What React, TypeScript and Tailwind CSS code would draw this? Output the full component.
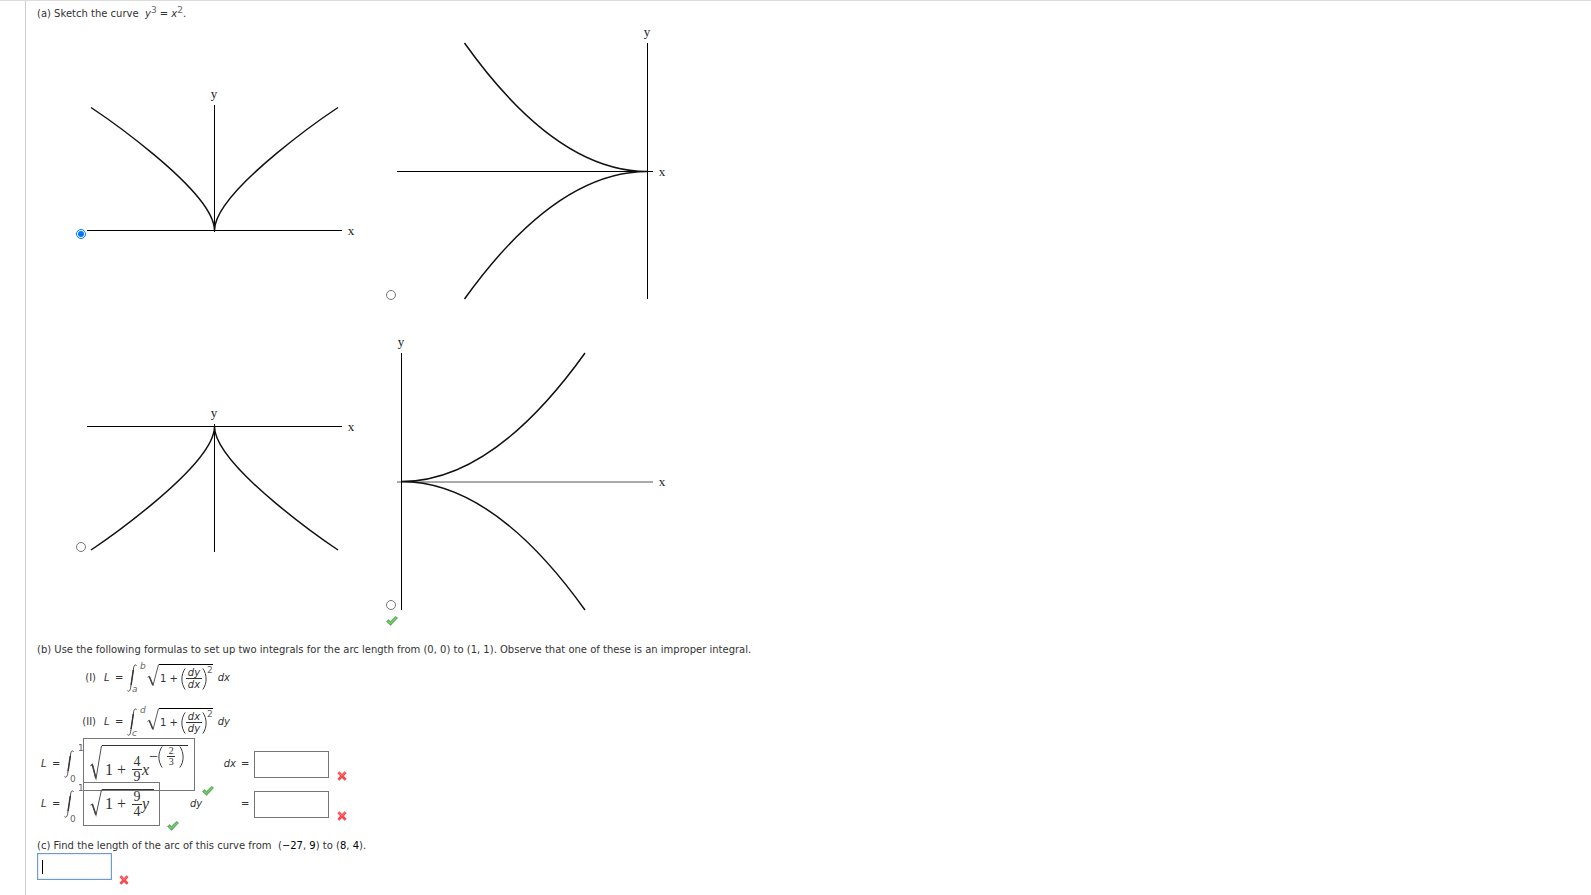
import React, { useState } from "react";

interface GraphProps {
  name: string;
  height: number;
  xAxis: string;
  yAxis: string;
  curve: string;
  xLabel: [number, number];
  yLabel: [number, number];
  lightAxis?: boolean;
}

const graphs: GraphProps[] = [
  {
    name: "Cusp at the origin opening upward",
    height: 156,
    xAxis: "M0 145.5H255",
    yAxis: "M127.5 20V147",
    curve: "M4 22.5C4 22.5 127.5 104.5 127.5 145.5C127.5 104.5 251 22.5 251 22.5",
    xLabel: [264, 150],
    yLabel: [127, 13],
  },
  {
    name: "Cusp at the origin opening to the left",
    height: 278,
    xAxis: "M0 147.5H256",
    yAxis: "M250.5 19V275",
    curve: "M67.5 19Q159 147.5 250.5 147.5Q159 147.5 67.5 275",
    xLabel: [265, 152],
    yLabel: [250, 12],
  },
  {
    name: "Cusp at the origin opening downward",
    height: 148,
    xAxis: "M0 20.5H255",
    yAxis: "M127.5 18V146",
    curve: "M4 144C4 144 127.5 61.5 127.5 20.5C127.5 61.5 251 144 251 144",
    xLabel: [264, 25],
    yLabel: [127, 11],
  },
  {
    name: "Cusp at the origin opening to the right",
    height: 278,
    xAxis: "M0 148H256",
    yAxis: "M4.5 19V276",
    curve: "M188 19Q96 147.5 4.5 147.5Q96 147.5 188 276",
    xLabel: [265, 152],
    yLabel: [4, 12],
    lightAxis: true,
  },
];

const Graph: React.FC<GraphProps> = ({ name, height, xAxis, yAxis, curve, xLabel, yLabel, lightAxis }) => (
  <svg
    role="img"
    aria-label={name}
    width={280}
    height={height}
    viewBox={`0 0 280 ${height}`}
    fill="none"
    className="shrink-0 overflow-visible font-['Liberation_Serif',serif] text-[13px]"
  >
    <path d={xAxis} stroke={lightAxis ? "#555" : "#000"} />
    <path d={yAxis} stroke="#000" />
    <path d={curve} stroke="#111" strokeWidth="1.5" />
    <text x={xLabel[0]} y={xLabel[1]} fill="#222" textAnchor="middle">x</text>
    <text x={yLabel[0]} y={yLabel[1]} fill="#222" textAnchor="middle">y</text>
  </svg>
);

const Check = () => (
  <svg role="img" aria-label="Correct" width="12" height="10" viewBox="0 0 12 10" className="shrink-0">
    <path d="M.5 5.5L2.6 3.6L4.4 5.4L9.5.5L11.6 1.8L4.6 9.4Z" fill="#5fb85a" stroke="#4a9c4a" strokeWidth=".6" />
    <path d="M1.8 5.4L4.4 7.4L10 1.8" fill="none" stroke="#8ed686" strokeWidth=".8" />
  </svg>
);

const Cross = () => (
  <svg role="img" aria-label="Incorrect" width="10" height="10" viewBox="0 0 10 10" className="shrink-0">
    <path d="M1.4 1.2L8.6 8.8M8.6 1.2L1.4 8.8" stroke="#f4494d" strokeWidth="2.7" />
    <path d="M1.3 1.1L5 4.8L8.5 1.2" fill="none" stroke="#ff8585" strokeWidth=".9" />
  </svg>
);

interface IntegralProps {
  lower: string;
  upper: string;
  numeric?: boolean;
}

const Integral: React.FC<IntegralProps> = ({ lower, upper, numeric }) => (
  <span className={`flex items-center text-[9px] leading-[9px] text-[#666] ${numeric ? "" : "italic"}`}>
    <svg width="10" height="28" viewBox="0 0 10 28" fill="none" stroke="#333" className="shrink-0">
      <path d="M9.7 1.8C8.5.2 7.2.8 6.7 3.5L3.7 23.5C3.2 27 1.8 28 .4 26.6" strokeWidth=".9" />
      <path d="M6.3 6L4.1 21" strokeWidth="1.4" />
    </svg>
    <span className={`flex w-2 flex-col justify-between ${numeric ? "h-10" : "h-8"}`}>
      <span className={numeric ? "pl-1" : "pl-[3px]"}>{upper}</span>
      <span className={numeric ? "-ml-1" : "-ml-[5px]"}>{lower}</span>
    </span>
  </span>
);

const Paren = ({ right, height }: { right?: boolean; height: number }) => (
  <svg width="5" height={height} viewBox="0 0 5 24" preserveAspectRatio="none" fill="none" stroke="#333" className="shrink-0">
    <path d={right ? "M.8.5C5.2 7 5.2 17 .8 23.5" : "M4.2.5C-.2 7-.2 17 4.2 23.5"} />
  </svg>
);

const Radical = ({ height }: { height: number }) => (
  <svg width="12" height={height} viewBox="0 0 12 24" preserveAspectRatio="none" fill="none" stroke="#444" className="shrink-0">
    <path d="M.5 14L2.3 12.8L6 22.5L11.5.5" strokeWidth=".9" />
    <path d="M2.3 13L5.8 22" strokeWidth="1.5" />
  </svg>
);

const Fraction = ({ top, bottom }: { top: string; bottom: string }) => (
  <span className="flex flex-col text-center">
    <span className="border-b border-[#333]">{top}</span>
    <span>{bottom}</span>
  </span>
);

interface FormulaProps {
  label: string;
  lower: string;
  upper: string;
  top: string;
  bottom: string;
}

const Formula: React.FC<FormulaProps> = ({ label, lower, upper, top, bottom }) => (
  <div className="flex h-11 items-center">
    <span className="w-[59px] text-right">{label}</span>
    <span className="ml-2 w-[11px] italic">L</span>
    <span className="w-[12px]">=</span>
    <Integral lower={lower} upper={upper} />
    <span className="ml-[2px] flex h-7 items-start">
      <Radical height={23} />
      <span className="flex h-7 items-center border-t border-black pl-px">
        <span className="w-[21px] whitespace-nowrap">1 +</span>
        <Paren height={22} />
        <span className="w-4 italic leading-[11px]">
          <Fraction top={top} bottom={bottom} />
        </span>
        <Paren right height={22} />
        <sup className="top-0 self-start pt-px text-[9px] leading-[9px] text-[#666]">2</sup>
      </span>
    </span>
    <span className="ml-[5px] italic">{bottom}</span>
  </div>
);

const AnswerInput = ({ label }: { label: string }) => (
  <input
    type="text"
    aria-label={label}
    className="h-[27px] w-[75px] shrink-0 border border-[#767676] bg-white px-1 outline-none"
  />
);

export default function App() {
  const [selected, setSelected] = useState(0);

  const option = (index: number) => (
    <label className="flex items-end gap-px">
      <input
        type="radio"
        name="sketch"
        checked={selected === index}
        onChange={() => setSelected(index)}
        className="mb-[2px] size-[10px] shrink-0"
      />
      <Graph {...graphs[index]} />
    </label>
  );

  return (
    <main className="border-t border-[#ddd] bg-white font-['DejaVu_Sans',Verdana,sans-serif] text-[10px] leading-5 text-[#333]">
      <div className="ml-[25px] min-h-screen border-l border-[#ccc] pl-[11px]">
        <p className="pt-[3px]">
          (a) Sketch the curve &nbsp;<i>y</i>
          <sup className="text-[9px] text-[#666]">3</sup> = <i>x</i>
          <sup className="text-[9px] text-[#666]">2</sup>.
        </p>

        <div className="flex w-fit flex-col gap-8 pl-[39px]">
          <div className="flex items-center gap-[19px]">
            {option(0)}
            {option(1)}
          </div>
          <div className="flex items-center gap-[19px]">
            {option(2)}
            <div>
              {option(3)}
              <div className="flex pt-1">
                <Check />
              </div>
            </div>
          </div>
        </div>

        <p className="pt-[18px] leading-3">
          (b) Use the following formulas to set up two integrals for the arc length from (0, 0) to (1, 1). Observe that
          one of these is an improper integral.
        </p>

        <Formula label="(I)" lower="a" upper="b" top="dy" bottom="dx" />
        <Formula label="(II)" lower="c" upper="d" top="dx" bottom="dy" />

        <div className="flex h-10 items-center pl-1">
          <div className="flex w-[213px] items-center">
            <span className="w-[11px] italic">L</span>
            <span className="w-[12px]">=</span>
            <Integral lower="0" upper="1" numeric />
            <span className="ml-px flex h-[53px] w-28 shrink-0 items-start border border-[#767676] pl-[6px] pt-[6px] font-['Liberation_Serif',serif] text-base leading-5">
              <Radical height={36} />
              <span className="flex w-[86px] items-start border-t border-[#333] pl-[3px]">
                <span className="w-[27px] whitespace-nowrap pt-[14px]">1 +</span>
                <span className="w-[10px] pt-[9px] text-sm leading-[14px]">
                  <Fraction top="4" bottom="9" />
                </span>
                <span className="pt-[14px] italic">x</span>
                <span className="flex items-center">
                  <span className="leading-[22px]">−</span>
                  <Paren height={22} />
                  <span className="w-4 px-1 text-[10px] leading-[10px]">
                    <Fraction top="2" bottom="3" />
                  </span>
                  <Paren right height={22} />
                </span>
              </span>
            </span>
            <span className="ml-[7px] mt-[53px]">
              <Check />
            </span>
            <span className="ml-auto italic">dx</span>
            <span className="w-[18px] pl-[5px]">=</span>
          </div>
          <AnswerInput label="Value of the first integral" />
          <span className="ml-2 mt-6">
            <Cross />
          </span>
        </div>

        <div className="flex h-10 items-center pl-1">
          <div className="flex w-[213px] items-center">
            <span className="w-[11px] italic">L</span>
            <span className="w-[12px]">=</span>
            <Integral lower="0" upper="1" numeric />
            <span className="ml-px flex h-11 w-[77px] shrink-0 items-start border border-[#767676] pl-[6px] pt-[6px] font-['Liberation_Serif',serif] text-base leading-5">
              <Radical height={28} />
              <span className="flex w-[52px] items-start border-t border-[#333] pl-[3px]">
                <span className="w-[27px] whitespace-nowrap pt-1">1 +</span>
                <span className="w-[10px] text-sm leading-[14px]">
                  <Fraction top="9" bottom="4" />
                </span>
                <span className="pt-1 italic">y</span>
              </span>
            </span>
            <span className="ml-[7px] mt-[44px]">
              <Check />
            </span>
            <span className="ml-[11px] italic">dy</span>
            <span className="ml-auto w-[13px]">=</span>
          </div>
          <AnswerInput label="Value of the second integral" />
          <span className="ml-2 mt-6">
            <Cross />
          </span>
        </div>

        <label htmlFor="arc-length" className="block pt-[15px] leading-[14px]">
          (c) Find the length of the arc of this curve from &nbsp;(<span className="text-black">−27</span>,{" "}
          <span className="text-black">9</span>) to (<span className="text-black">8</span>,{" "}
          <span className="text-black">4</span>).
        </label>
        <div className="flex items-start gap-[7px]">
          <div className="relative flex">
            <input
              id="arc-length"
              type="text"
              className="h-[27px] w-[75px] border border-[#6f9bc9] bg-white px-1 caret-transparent shadow-[inset_0_0_2px_#9cc3ec] outline-none"
            />
            <span className="absolute left-[5px] top-[7px] h-[14px] w-px bg-black" />
          </div>
          <span className="mt-[22px] flex">
            <Cross />
          </span>
        </div>
      </div>
    </main>
  );
}
